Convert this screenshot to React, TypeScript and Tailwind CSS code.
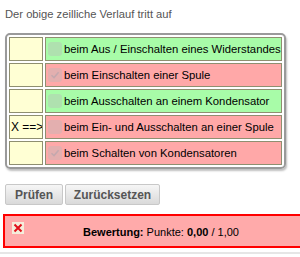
import React from 'react';

type Row = { label: string; ok: boolean; checked: boolean; marker?: string };

const rows: Row[] = [
  { label: 'beim Aus / Einschalten eines Widerstandes', ok: true, checked: false },
  { label: 'beim Einschalten einer Spule', ok: false, checked: true },
  { label: 'beim Ausschalten an einem Kondensator', ok: true, checked: false },
  { label: 'beim Ein- und Ausschalten an einer Spule', ok: false, checked: false, marker: 'X ==>' },
  { label: 'beim Schalten von Kondensatoren', ok: false, checked: true },
];

function Box({ checked }: { checked: boolean }) {
  return (
    <span className="w-[14px] h-[14px] rounded-[3px] bg-[#b8b8b8]/40 flex items-center justify-center shrink-0">
      {checked && (
        <svg width="10" height="10" viewBox="0 0 10 10">
          <path d="M1.5 5.2 L4 7.6 L8.6 2.2" fill="none" stroke="#c4a8ae" strokeWidth="1.5" />
        </svg>
      )}
    </span>
  );
}

export default function App() {
  return (
    <div className="w-[300px] h-[257px] overflow-hidden bg-white" style={{ fontFamily: '"Liberation Sans", Arial, sans-serif' }}>
      <p className="pt-[7px] pl-[5px] text-[11.2px] leading-[14px] text-[#555]">Der obige zeilliche Verlauf tritt auf</p>

      <div className="mt-[12px] ml-[5px] w-[281px] border-2 border-[#9a9a9a] rounded-[5px] shadow-[1px_2px_2px_rgba(0,0,0,0.25)]">
        <table className="w-full table-fixed border-separate border-spacing-[2px]">
          <colgroup>
            <col className="w-[34px]" />
            <col />
          </colgroup>
          <tbody>
            {rows.map((r) => (
              <tr key={r.label}>
                <td className="h-[24px] border border-[#8f8f70] bg-[#ffffd4] p-0 pl-[1px] text-[12px] leading-[14px] text-black whitespace-nowrap overflow-hidden">
                  {r.marker}
                </td>
                <td className={`h-[24px] border border-[#8f8f70] p-0 ${r.ok ? 'bg-[#a8fca8]' : 'bg-[#ffa8a8]'}`}>
                  <div className="flex items-center pl-[2px] gap-[2px]">
                    <Box checked={r.checked} />
                    <span className="text-[11.3px] leading-[15px] text-black whitespace-nowrap">{r.label}</span>
                  </div>
                </td>
              </tr>
            ))}
          </tbody>
        </table>
      </div>

      <div className="flex gap-[2px] mt-[15px] ml-[5px]">
        <button className="h-[21px] w-[58px] rounded-[2px] border border-[#c8c8c8] bg-gradient-to-b from-[#f6f6f6] to-[#d9d9d9] text-[12px] font-bold text-[#555]">
          Prüfen
        </button>
        <button className="h-[21px] w-[95px] rounded-[2px] border border-[#c8c8c8] bg-gradient-to-b from-[#f6f6f6] to-[#d9d9d9] text-[12px] font-bold text-[#555]">
          Zurücksetzen
        </button>
      </div>

      <div className="mt-[9px] ml-[3px] w-[316px] h-[34px] border-2 border-[#ff0000] bg-[#ffaaaa] flex items-start">
        <span className="mt-[6px] ml-[7px] w-[12px] h-[12px] bg-[#f4eedc] flex items-center justify-center shrink-0">
          <svg width="10" height="10" viewBox="0 0 10 10">
            <path d="M1.5 1.5 L8.5 8.5 M8.5 1.5 L1.5 8.5" stroke="#e0101a" strokeWidth="2" />
          </svg>
        </span>
        <p className="flex-1 text-center pt-[9px] pr-[19px] text-[11px] leading-[14px] text-black">
          <b>Bewertung:</b> Punkte: <b>0,00</b> / 1,00
        </p>
      </div>

      <div className="mt-[4px] h-[2px] bg-[#e6e6e6]" />
    </div>
  );
}
